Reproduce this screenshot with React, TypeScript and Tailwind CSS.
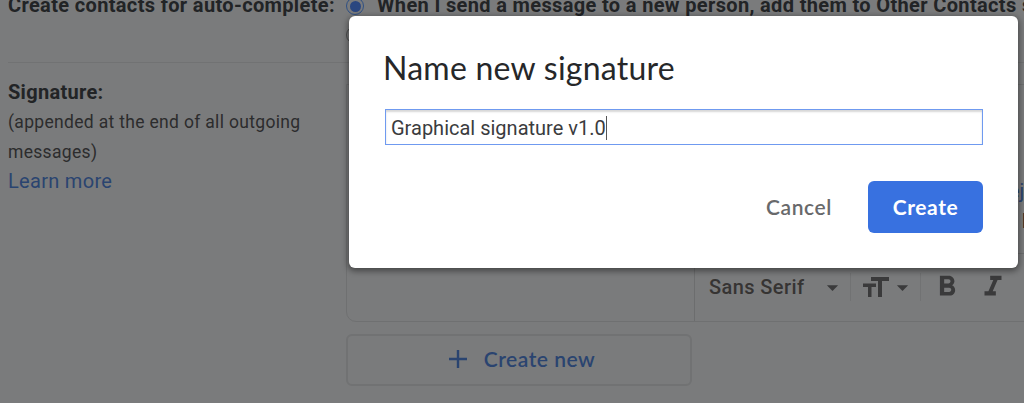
import { MdFormatBold, MdFormatItalic, MdArrowDropDown } from 'react-icons/md'

function SettingLabel() {
  return (
    <div className="w-[346px] shrink-0 pl-2 pt-[14px]">
      <p className="text-[20px] font-bold leading-[30px] tracking-[0.3px] text-[#222426]">
        Signature:
      </p>
      <p className="whitespace-nowrap text-[17.5px] leading-[30px] tracking-[0.32px] text-[#2c2c2d]">
        (appended at the end of all outgoing
        <br />
        messages)
      </p>
      <a className="block text-[20px] leading-[28px] tracking-[0.3px] text-[#2a4470]">
        Learn more
      </a>
    </div>
  )
}

function TextSizeIcon() {
  return (
    <svg className="h-[20px] w-[26px]" viewBox="0 0 26 20" fill="currentColor">
      <path d="M8 0h18v4h-7v16h-4V4H8z" />
      <path d="M0 6.500h13v3.500H8.500v10H5V10H0z" />
    </svg>
  )
}

function Toolbar() {
  return (
    <div className="flex h-[48px] items-center pl-[14px] text-[#3a3a3b]">
      <span className="w-[110px] whitespace-nowrap text-[20px] font-medium tracking-[0.4px] text-[#363433]">
        Sans Serif
      </span>
      <MdArrowDropDown className="h-[27px] w-[27px]" />
      <span className="ml-1 h-7 w-px bg-[#717273]" />
      <span className="ml-3">
        <TextSizeIcon />
      </span>
      <MdArrowDropDown className="h-[27px] w-[27px]" />
      <span className="ml-1 h-7 w-px bg-[#717273]" />
      <MdFormatBold className="ml-[9px] h-[34px] w-[34px]" />
      <MdFormatItalic className="ml-[12px] h-[34px] w-[34px]" />
    </div>
  )
}

function SignatureEditor() {
  return (
    <div className="flex h-[238px] w-[760px] rounded-bl-[10px] border border-[#6f7071]">
      <div className="w-[348px] shrink-0 border-r border-[#6c6d6e]" />
      <div className="flex flex-1 flex-col">
        <div className="h-[169px] overflow-hidden border-b border-[#6c6d6e] pl-[314px] pt-[91px] text-[20px] leading-[30px]">
          <p className="text-[#2a4470]">eject</p>
          <p className="pl-[13px] font-bold text-[#262424]">Ltd</p>
        </div>
        <div className="pt-[9px]">
          <Toolbar />
        </div>
      </div>
    </div>
  )
}

function SettingsPage() {
  return (
    <div className="h-full overflow-hidden bg-[#7a7b7c]">
      <div className="h-[62px]">
        <div className="flex h-5 items-start whitespace-nowrap pl-2 text-[20px] font-bold leading-[30px] tracking-[0.35px] text-[#222426]">
          <span className="-mt-[10px] w-[338px] shrink-0">Create contacts for auto-complete:</span>
          <span className="-mt-[3px] flex h-[18px] w-[18px] shrink-0 items-center justify-center rounded-full border border-[#2f5084]">
            <span className="h-[11px] w-[11px] rounded-full bg-[#2b4780]" />
          </span>
          <span className="-mt-[10px] ml-[13px] tracking-[0.35px]">
            When I send a message to a new person, add them to Other Contacts so that
          </span>
        </div>
        <div className="ml-[346px] mt-[6px] h-[18px] w-[18px] rounded-full border border-[#4c4d4e]" />
      </div>
      <div className="ml-2 h-px bg-[#717273]" />
      <div className="flex">
        <SettingLabel />
        <div className="pt-[21px]">
          <SignatureEditor />
          <button className="mt-3 flex h-[52px] w-[346px] items-center justify-center gap-[17px] rounded-[6px] border-2 border-[#717273] pb-0.5 pl-1.5 font-[Lato] text-[21px] font-semibold tracking-[0.5px] text-[#2a4470]">
            <svg className="h-[18px] w-[18px]" viewBox="0 0 18 18" fill="currentColor">
              <path d="M7.800 0h2.400v7.800H18v2.400h-7.800V18H7.800v-7.800H0V7.800h7.800z" />
            </svg>
            Create new
          </button>
        </div>
      </div>
    </div>
  )
}

function NameDialog() {
  return (
    <div className="absolute left-[349px] top-4 h-[252px] w-[669px] rounded-[6px] bg-white pl-9 pr-[35px] pt-[31px] font-[Lato] shadow-[0_2px_6px_1px_rgba(0,0,0,0.45)]">
      <h2 className="-ml-0.5 whitespace-nowrap text-[32px] leading-[42px] tracking-[0.25px] text-[#262729]">
        Name new signature
      </h2>
      <div className="mt-5 flex h-9 w-[598px] items-center border border-[#6f9af0] pl-[5px] pt-px font-[Roboto] text-[20px] text-[#3b3c3e] shadow-[inset_0_2px_2px_rgba(0,0,0,0.16)]">
        <span>Graphical signature v1.0</span>
        <span className="h-6 w-px bg-[#555]" />
      </div>
      <div className="mt-9 flex h-[52px] items-center justify-end text-[21px] tracking-[0.6px]">
        <button className="font-semibold text-[#68696b]">Cancel</button>
        <button className="ml-9 h-[52px] w-[115px] rounded-[6px] bg-[#3871e0] font-bold text-white">
          Create
        </button>
      </div>
    </div>
  )
}

export default function App() {
  return (
    <div className="relative h-[403px] w-[1024px] overflow-hidden font-[Roboto]">
      <SettingsPage />
      <NameDialog />
    </div>
  )
}
